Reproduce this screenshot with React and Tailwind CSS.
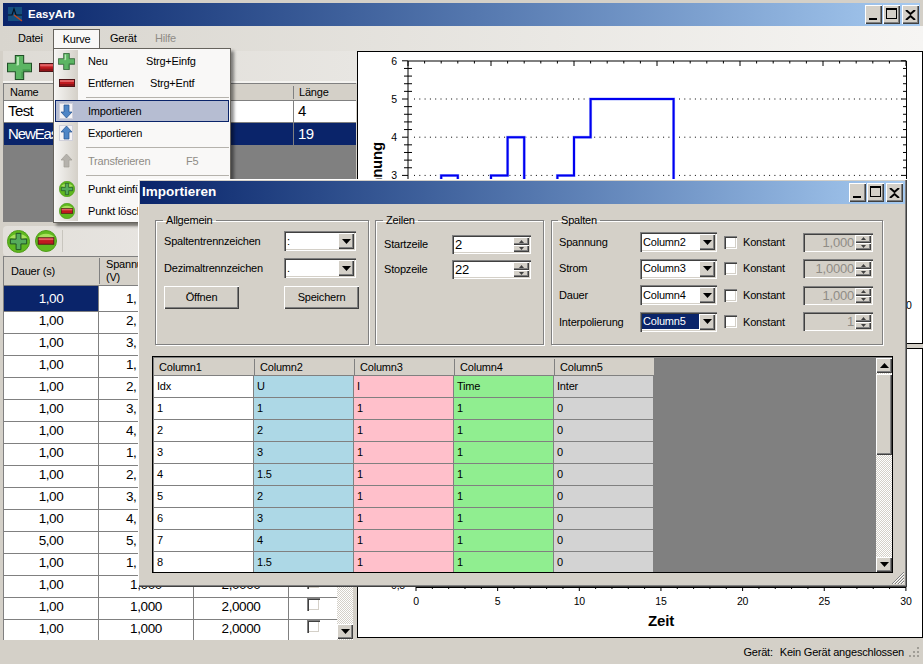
// EasyArb main window with the Kurve menu open and the import dialog on top
const raised = 'bg-[#d4d0c8] shadow-[inset_1px_1px_0_#fff,inset_-1px_-1px_0_#404040,inset_-2px_-2px_0_#808080]'
const sunken = 'shadow-[inset_1px_1px_0_#808080,inset_2px_2px_0_#404040,inset_-1px_-1px_0_#fff,inset_-2px_-2px_0_#d4d0c8]'
const dither = 'bg-[repeating-conic-gradient(#d4d0c8_0_25%,#fff_0_50%)] bg-[length:2px_2px]'
const titleGradient = 'bg-gradient-to-r from-[#0a246a] to-[#a6caf0]'

// duration (s), voltage, voltage as number
const points = [
  [1, '1,000', 1], [1, '2,000', 2], [1, '3,000', 3], [1, '1,500', 1],
  [1, '2,000', 2], [1, '3,000', 3], [1, '4,000', 4], [1, '1,500', 1],
  [1, '2,000', 2], [1, '3,000', 3], [1, '4,000', 4], [5, '5,000', 5],
  [1, '1,000', 1], [1, '1,000', 1], [1, '1,000', 1], [1, '1,000', 1],
]
// rows before this one lie behind the dialog
const firstFreeRow = 13

const csvRows = [
  ['Idx', 'U', 'I', 'Time', 'Inter'],
  ['1', '1', '1', '1', '0'],
  ['2', '2', '1', '1', '0'],
  ['3', '3', '1', '1', '0'],
  ['4', '1.5', '1', '1', '0'],
  ['5', '2', '1', '1', '0'],
  ['6', '3', '1', '1', '0'],
  ['7', '4', '1', '1', '0'],
  ['8', '1.5', '1', '1', '0'],
]
const csvColors = ['bg-white', 'bg-[#add8e6]', 'bg-[#ffc0cb]', 'bg-[#90ee90]', 'bg-[#d3d3d3]']

function PlusIcon({ size = 24 }) {
  return (
    <svg width={size} height={size} viewBox="0 0 24 24" className="shrink-0">
      <path d="M8 .5h8v7.500h7.500v8H16v7.500H8V16H.5V8H8z" fill="#5cb563" stroke="#1f4f26" />
      <path d="M9.500 2h2v7.500H2v2h0v-2h7.500z" fill="#b5e6b4" />
      <path d="M9 9.500h2" stroke="#b5e6b4" />
      <path d="M14 16h1v6h-1zM22 14v1h-7v-1z" fill="#3b8f45" />
    </svg>
  )
}

function MinusIcon({ w = 16, h = 8 }) {
  return (
    <svg width={w} height={h} viewBox="0 0 16 8" preserveAspectRatio="none" className="shrink-0">
      <rect x="0.5" y="0.5" width="15" height="7" fill="#c01a1f" stroke="#4f1518" />
      <rect x="1" y="1" width="14" height="2" fill="#e06063" />
      <rect x="1" y="5" width="14" height="2" fill="#8c1418" />
    </svg>
  )
}

function RoundIcon({ minus, size = 16 }) {
  return (
    <svg width={size} height={size} viewBox="0 0 24 24" className="shrink-0">
      <circle cx="12" cy="12" r="11.500" fill="#5fb81f" stroke="#4c9a18" />
      <path d="M3 8a10 7 0 0 1 18 0a16 8 0 0 1-18 0z" fill="#a8e05c" />
      {minus ? (
        <>
          <rect x="3.500" y="8.500" width="17" height="7" fill="#c01a1f" stroke="#4f1518" />
          <rect x="4" y="9" width="16" height="2" fill="#e06063" />
        </>
      ) : (
        <path d="M9.500 3.500h5v6h6v5h-6v6h-5v-6h-6v-5h6z" fill="#55ab5b" stroke="#1f4f26" />
      )}
    </svg>
  )
}

function ArrowIcon({ up, gray }) {
  const fill = gray ? '#b5b2ac' : '#4f86c6'
  const stroke = gray ? '#a09d96' : '#23508c'
  return (
    <svg width="17" height="18" viewBox="0 0 17 18" className="shrink-0">
      {!gray && <rect x="1.500" y="1.500" width="13" height="15" fill="#f4f3f6" stroke="#d0d0da" />}
      {up ? (
        <path d="M8.500 2L14 8h-3v7H6V8H3z" fill={fill} stroke={stroke} strokeWidth="0.7" />
      ) : (
        <path d="M6 3h5v7h3l-5.500 6L3 10h3z" fill={fill} stroke={stroke} strokeWidth="0.7" />
      )}
    </svg>
  )
}

function AppIcon() {
  return (
    <svg width="15" height="15" viewBox="0 0 15 15" className="shrink-0">
      <rect width="14" height="14" fill="#16507f" />
      <path d="M0 8h4l2-6 2 6h6" fill="none" stroke="#06111f" strokeWidth="1.2" />
      <path d="M6 8l8 6" stroke="#c8481c" strokeWidth="1.3" />
    </svg>
  )
}

function CaptionButtons() {
  return (
    <div className="flex gap-px">
      <div className={`w-[17px] h-[19px] relative ${raised}`}>
        <div className="absolute left-[4px] bottom-[4px] w-[8px] h-[2px] bg-black" />
      </div>
      <div className={`w-[17px] h-[19px] relative ${raised}`}>
        <div className="absolute left-[3px] top-[3px] w-[11px] h-[11px] border border-black border-t-2" />
      </div>
      <div className={`w-[17px] h-[19px] ml-px flex items-center justify-center ${raised}`}>
        <svg width="11" height="10" viewBox="0 0 11 10">
          <path d="M1 0l4.500 4L10 0M1 10l4.500-4L10 10" fill="none" stroke="#000" strokeWidth="2" />
        </svg>
      </div>
    </div>
  )
}

function Triangle({ up, small }) {
  const w = small ? 5 : 9
  const h = small ? 3 : 5
  return (
    <svg width={w} height={h} viewBox="0 0 8 4" preserveAspectRatio="none">
      <path d={up ? 'M0 4L4 0l4 4z' : 'M0 0h8L4 4z'} fill={small ? '#404040' : '#000'} />
    </svg>
  )
}

function Combo({ value, selected, w = 'w-[72px]' }) {
  return (
    <div className={`h-[20px] ${w} bg-white flex items-center p-[2px] shrink-0 ${sunken}`}>
      <span className={`flex-1 min-w-0 h-[15px] pl-[1px] leading-[15px] ${selected ? 'bg-[#0a246a] text-white' : ''}`}>{value}</span>
      <div className={`w-[16px] h-[16px] flex items-center justify-center ${raised}`}>
        <Triangle />
      </div>
    </div>
  )
}

function Spin({ value, disabled, w }) {
  return (
    <div className={`h-[19px] ${w} flex items-center p-[2px] shrink-0 ${sunken} ${disabled ? 'bg-[#d4d0c8] text-[#8f8c86] justify-end' : 'bg-white'}`}>
      <span className={`flex-1 leading-[15px] ${disabled ? 'text-right pr-[1px] text-[13px]' : 'pl-[1px] text-[13px]'}`}>{value}</span>
      <div className="w-[16px] flex flex-col gap-0">
        <div className={`h-[8px] flex items-center justify-center ${raised}`}><Triangle up small /></div>
        <div className={`h-[7px] flex items-center justify-center ${raised}`}><Triangle small /></div>
      </div>
    </div>
  )
}

function Check() {
  return <div className={`w-[13px] h-[13px] bg-white shrink-0 ${sunken}`} />
}

function ScrollButton({ up }) {
  return (
    <div className={`w-[16px] h-[15px] shrink-0 flex items-center justify-center ${raised}`}>
      <Triangle up={up} />
    </div>
  )
}

function Group({ title, className, children }) {
  return (
    <fieldset className={`border border-[#808080] shadow-[inset_1px_1px_0_#fff,1px_1px_0_#fff] h-[132px] ${className}`}>
      <legend className="ml-[-1px] px-[3px] h-[14px] leading-[14px]">{title}</legend>
      {children}
    </fieldset>
  )
}

function MenuItem({ icon, label, shortcut, shortcutClass = '', gray, active }) {
  return (
    <div className={`relative h-[22px] flex items-center ${gray ? 'text-[#8f8c86]' : ''}`}>
      <div className={`absolute inset-0 ${active ? 'bg-[#b6bdd2] border border-[#0a246a]' : ''}`} />
      <div className="relative w-[23px] flex justify-center">{icon}</div>
      <span className="relative ml-[10px] w-[58px] whitespace-nowrap">{label}</span>
      {shortcut && <span className={`relative whitespace-nowrap ${shortcutClass}`}>{shortcut}</span>}
    </div>
  )
}

function MenuSep() {
  return (
    <div className="h-[6px] flex items-center pl-[31px]">
      <div className="h-px flex-1 bg-[#b5b2ac]" />
    </div>
  )
}

function KurveMenu() {
  return (
    <div className="absolute left-0 top-[19px] w-[178px] h-[175px] bg-[#f9f8f7] border border-[#66635d] shadow-[3px_3px_3px_rgba(0,0,0,0.45)] p-px">
      <div className="absolute left-px top-px bottom-px w-[23px] bg-gradient-to-r from-[#f5f4f2] to-[#d4d0c8]" />
      <MenuItem icon={<PlusIcon size={17} />} label="Neu" shortcut="Strg+Einfg" />
      <MenuItem icon={<MinusIcon />} label="Entfernen" shortcut="Strg+Entf" shortcutClass="ml-[4px]" />
      <MenuSep />
      <MenuItem icon={<ArrowIcon />} label="Importieren" active />
      <MenuItem icon={<ArrowIcon up />} label="Exportieren" />
      <MenuSep />
      <MenuItem icon={<ArrowIcon up gray />} label="Transferieren" shortcut="F5" shortcutClass="ml-[40px]" gray />
      <MenuSep />
      <MenuItem icon={<RoundIcon />} label="Punkt einfügen" />
      <MenuItem icon={<RoundIcon minus />} label="Punkt löschen" />
    </div>
  )
}

function TopChart() {
  const x = (t) => 408 + t * 16.6
  const y = (v) => 290 - v * 38.2
  let t = 0
  const line = []
  points.forEach(([dur, , v]) => {
    line.push(`${x(t)},${y(v)}`)
    t += dur
    line.push(`${x(t)},${y(v)}`)
  })
  const ticksX = Array.from({ length: 31 }, (_, i) => i)
  const ticksY = Array.from({ length: 31 }, (_, i) => i / 5)
  return (
    <svg viewBox="358 52 564 291" className="block w-full h-full">
      {[1, 2, 3, 4, 5].map((v) => (
        <line key={v} x1="414" x2="902" y1={y(v)} y2={y(v)} stroke="#000" strokeDasharray="1 4.300" />
      ))}
      <path d="M408 61H906.500V290H408z" fill="none" stroke="#000" />
      {ticksX.map((i) => (
        <line key={i} x1={x(i)} x2={x(i)} y1="61" y2={i % 5 ? 63.500 : 66} stroke="#000" />
      ))}
      {ticksY.map((v, i) => (
        <g key={i}>
          <line x1={i % 5 ? 404 : 402} x2={i % 5 ? 412 : 408} y1={y(v)} y2={y(v)} stroke="#000" />
          <line x1={i % 5 ? 903 : 901} x2="906" y1={y(v)} y2={y(v)} stroke="#000" />
        </g>
      ))}
      <polyline points={line.join(' ')} fill="none" stroke="#aab4ff" strokeWidth="3" />
      <polyline points={line.join(' ')} fill="none" stroke="#0000f0" strokeWidth="2" />
      <g fontSize="10.500" fontFamily="'Liberation Sans', sans-serif" fill="#000">
        {[6, 5, 4, 3].map((v) => (
          <text key={v} x="394" y={y(v) + 4} textAnchor="middle">{v}</text>
        ))}
        <text x="906" y="309" textAnchor="middle">30</text>
      </g>
      <text
        transform="translate(382 142) rotate(-90)"
        textAnchor="end"
        fontSize="15"
        fontWeight="700"
        fontFamily="'Liberation Sans', sans-serif"
      >
        Spannung
      </text>
    </svg>
  )
}

function BottomChart() {
  const x = (t) => 416 + t * 16.33
  const ticks = Array.from({ length: 31 }, (_, i) => i)
  return (
    <svg viewBox="358 349 564 288" className="block w-full h-full">
      <line x1="416" x2="906" y1="587.500" y2="587.500" stroke="#000" />
      {ticks.map((i) => (
        <line key={i} x1={x(i)} x2={x(i)} y1="587" y2={i % 5 ? 589 : 591} stroke="#000" />
      ))}
      <g fontSize="10.500" fontFamily="'Liberation Sans', sans-serif" fill="#000">
        {[0, 5, 10, 15, 20, 25, 30].map((v) => (
          <text key={v} x={x(v)} y="605" textAnchor="middle">{v}</text>
        ))}
        <text x="398" y="589" textAnchor="middle">0,5</text>
      </g>
      <text x="661" y="626" textAnchor="middle" fontSize="15" fontWeight="700" fontFamily="'Liberation Sans', sans-serif">
        Zeit
      </text>
    </svg>
  )
}

function CurveTable() {
  return (
    <div className="h-[139px] bg-[#808080] border-t border-l border-[#808080] mr-[1px] overflow-hidden">
      <div className="flex h-[17px] bg-[#d4d0c8] border-b border-[#808080] items-center">
        <div className="w-[289px] pl-[6px]">Name</div>
        <div className="border-l border-[#808080] h-[13px] leading-[13px] pl-[5px]">Länge</div>
      </div>
      <div className="flex h-[22px] bg-white text-black text-[15px] tracking-[-0.6px] items-center border-b border-[#808080]">
        <div className="w-[289px] pl-[4px]">Test</div>
        <div className="pl-[4px] flex-1 border-l border-[#808080]">4</div>
      </div>
      <div className="flex h-[22px] bg-[#0a246a] text-white text-[15px] tracking-[-0.6px] items-center">
        <div className="w-[289px] pl-[4px] tracking-[-1.1px]">NewEas</div>
        <div className="pl-[4px] flex-1 border-l border-[#808080]">19</div>
      </div>
    </div>
  )
}

function PointTable() {
  return (
    <div className="flex-1 flex min-h-0 mr-[1px]">
      <div className="w-[334px] border-l border-t border-[#808080] bg-white overflow-hidden">
        <div className="grid grid-cols-[95px_95px_95px_49px] h-[29px] bg-[#d4d0c8] border-b border-[#808080] items-center">
          <div className="pl-[7px]">Dauer (s)</div>
          <div className="pl-[6px] leading-[13px] border-l border-[#808080]">Spannung<br />(V)</div>
        </div>
        {points.map(([dur, volt], i) => {
          const covered = i < firstFreeRow
          return (
            <div key={i} className="grid grid-cols-[95px_95px_95px_49px] h-[22px] text-[13.5px] tracking-[-0.4px] text-center leading-[25px]">
              <div className={`border-b border-r border-[#808080] ${i === 0 ? 'bg-[#0a246a] text-white' : ''}`}>{dur},00</div>
              <div className={`border-b border-r border-[#808080] ${covered ? 'text-left pl-[27px]' : ''}`}>{covered ? volt.slice(0, 2) : volt}</div>
              <div className="border-b border-r border-[#808080]">{covered ? '' : '2,0000'}</div>
              <div className="border-b border-[#808080] flex justify-center pt-[4px]"><Check /></div>
            </div>
          )
        })}
      </div>
      <div className={`w-[16px] flex flex-col justify-end ${dither}`}>
        <div className="mb-px"><ScrollButton /></div>
      </div>
    </div>
  )
}

function ImportDialog() {
  const spalten = [
    ['Spannung', 'Column2', '1,000'],
    ['Strom', 'Column3', '1,0000'],
    ['Dauer', 'Column4', '1,000'],
    ['Interpolierung', 'Column5', '1'],
  ]
  return (
    <div className={`absolute left-[138px] top-[179px] w-[769px] h-[408px] z-20 ${raised} p-[2px] flex flex-col`}>
      <div className={`h-[23px] shrink-0 flex items-center justify-between pl-[2px] pr-[2px] ${titleGradient}`}>
        <span className="text-white font-bold text-[13.5px] tracking-normal">Importieren</span>
        <CaptionButtons />
      </div>

      <div className="flex pl-[15px] pt-[9px]">
        <Group title="Allgemein" className="w-[214px] mr-[6px] pl-[8px]">
          <div className="flex flex-col gap-[7px] pt-[4px]">
            <div className="flex items-center justify-between pr-[12px]">
              <span>Spaltentrennzeichen</span>
              <Combo value=":" />
            </div>
            <div className="flex items-center justify-between pr-[12px]">
              <span>Dezimaltrennzeichen</span>
              <Combo value="." />
            </div>
            <div className="flex justify-between pr-[9px] mt-[1px]">
              <div className={`w-[75px] h-[23px] flex items-center justify-center ${raised}`}>Öffnen</div>
              <div className={`w-[75px] h-[23px] flex items-center justify-center ${raised}`}>Speichern</div>
            </div>
          </div>
        </Group>

        <Group title="Zeilen" className="w-[169px] mr-[7px] pl-[8px]">
          <div className="flex flex-col gap-[6px] pt-[8px]">
            <div className="flex items-center">
              <span className="w-[68px]">Startzeile</span>
              <Spin value="2" w="w-[79px]" />
            </div>
            <div className="flex items-center">
              <span className="w-[68px]">Stopzeile</span>
              <Spin value="22" w="w-[79px]" />
            </div>
          </div>
        </Group>

        <Group title="Spalten" className="w-[332px] pl-[7px]">
          <div className="flex flex-col gap-[6.67px] pt-[5px]">
            {spalten.map(([label, col, konst]) => (
              <div key={label} className="flex items-center">
                <span className="w-[81px]">{label}</span>
                <Combo value={col} selected={label === 'Interpolierung'} w="w-[77px]" />
                <div className="ml-[7px]"><Check /></div>
                <span className="ml-[6px] w-[60px]">Konstant</span>
                <Spin value={konst} disabled w="w-[70px]" />
              </div>
            ))}
          </div>
        </Group>
      </div>

      <div className="ml-[12px] mt-[11px] w-[741px] h-[217px] border border-black pl-px pt-px bg-[#808080] flex overflow-hidden">
        <div className="flex-1 min-w-0">
          <div className="grid grid-cols-[100px_100px_100px_100px_100px] w-[500px] h-[17px] bg-[#d4d0c8] items-center">
            {['Column1', 'Column2', 'Column3', 'Column4', 'Column5'].map((c, i) => (
              <div key={c} className={`pl-[5px] h-[16px] leading-[16px] ${i ? 'border-l border-[#808080]' : ''}`}>{c}</div>
            ))}
          </div>
          {csvRows.map((row, r) => (
            <div key={r} className="grid grid-cols-[100px_100px_100px_100px_100px] w-[500px] h-[22px] leading-[21px]">
              {row.map((cell, c) => (
                <div key={c} className={`pl-[3px] border-t border-r border-[#808080] ${csvColors[c]}`}>{cell}</div>
              ))}
            </div>
          ))}
        </div>
        <div className={`w-[16px] flex flex-col ${dither}`}>
          <ScrollButton up />
          <div className={`h-[81px] mt-px ${raised}`} />
          <div className="flex-1" />
          <ScrollButton />
        </div>
      </div>

      <svg width="14" height="14" viewBox="0 0 14 14" className="absolute right-[2px] bottom-[2px]">
        <path d="M13 1L1 13M13 4L4 13M13 7L7 13M13 10L10 13" stroke="#808080" />
        <path d="M13 2L2 13M13 5L5 13M13 8L8 13M13 11L11 13" stroke="#fff" />
      </svg>
    </div>
  )
}

export default function App() {
  return (
    <div className="relative w-[923px] h-[664px] overflow-hidden bg-[#d4d0c8] flex flex-col text-[11px] tracking-[-0.2px] text-black font-['Liberation_Sans',sans-serif]">
      <div className={`mt-[3px] mx-[3px] h-[23px] shrink-0 flex items-center justify-between pl-[5px] pr-[1px] ${titleGradient}`}>
        <div className="flex items-center gap-[5px]">
          <AppIcon />
          <span className="text-white font-bold text-[11.500px] tracking-normal">EasyArb</span>
        </div>
        <CaptionButtons />
      </div>

      {/* menu bar */}
      <div className="h-[25px] shrink-0 flex items-end pl-[3px] bg-gradient-to-r from-[#d8d5ce] to-[#f6f5f3]">
        <span className="ml-[15px] mb-[5px] w-[35px]">Datei</span>
        <div className="relative h-[20px] w-[47px] mb-[2px] bg-[#f9f8f7] border border-b-0 border-[#66635d] text-center leading-[19px]">
          Kurve
          <div className="absolute top-[-1px] left-[-1px] text-left leading-[normal]"><KurveMenu /></div>
        </div>
        <span className="ml-[10px] mb-[5px] w-[45px]">Gerät</span>
        <span className="mb-[5px] text-[#8f8c86]">Hilfe</span>
      </div>

      <div className="flex-1 min-h-0 flex pl-[3px]">
        {/* left column */}
        <div className="w-[354px] shrink-0 flex flex-col">
          <div className="h-[32px] shrink-0 flex items-center gap-[7px] pl-[4px] pt-[2px] border-b-2 border-[#f4f3f0] bg-gradient-to-r from-[#dedbd5] to-[#e8e6e2]">
            <PlusIcon size={25} />
            <MinusIcon w={18} h={9} />
          </div>
          <CurveTable />
          <div className="h-[30px] shrink-0 mt-[4px] mr-[2px] flex items-center gap-[5px] pl-[4px] rounded-tl-[4px] rounded-bl-[4px] bg-gradient-to-r from-[#e2dfda] to-[#eeece9]">
            <RoundIcon size={23} />
            <RoundIcon minus size={22} />
            <div className="w-px h-[22px] bg-[#c8c5be]" />
          </div>
          <PointTable />
        </div>

        {/* right column, the two plots */}
        <div className="w-[566px] shrink-0 flex flex-col gap-[4px] pb-[2px]">
          <div className="h-[293px] border border-black bg-white"><TopChart /></div>
          <div className="flex-1 min-h-0 border border-black bg-white"><BottomChart /></div>
        </div>
      </div>

      {/* status bar */}
      <div className="h-[24px] shrink-0 flex items-center justify-end pr-[3px]">
        <span>Gerät:</span>
        <span className="ml-[7px]">Kein Gerät angeschlossen</span>
        <svg width="12" height="12" viewBox="0 0 12 12" className="ml-[4px]">
          <path d="M9 1h2v2H9zM5 5h2v2H5zM9 5h2v2H9zM1 9h2v2H1zM5 9h2v2H5zM9 9h2v2H9z" fill="#a09d96" />
        </svg>
      </div>

      <ImportDialog />
    </div>
  )
}
